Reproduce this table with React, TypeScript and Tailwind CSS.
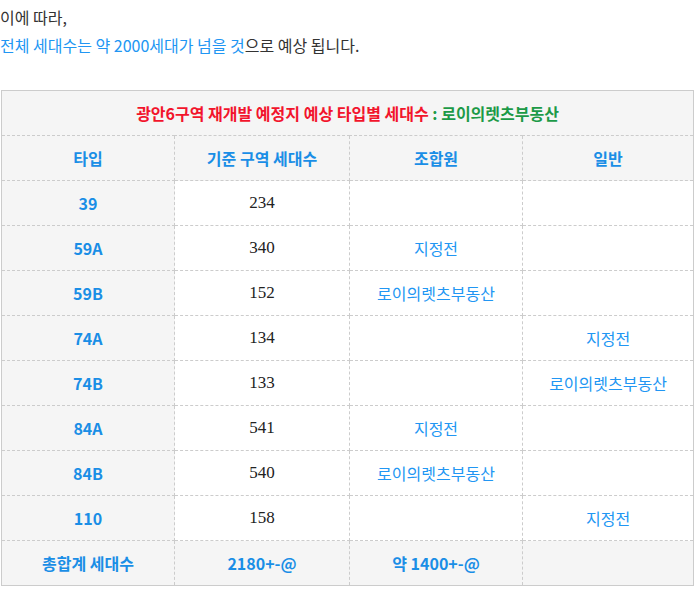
import React from "react";

const rows: [string, string, string, string][] = [
  ["39", "234", "", ""],
  ["59A", "340", "지정전", ""],
  ["59B", "152", "로이의렛츠부동산", ""],
  ["74A", "134", "", "지정전"],
  ["74B", "133", "", "로이의렛츠부동산"],
  ["84A", "541", "지정전", ""],
  ["84B", "540", "로이의렛츠부동산", ""],
  ["110", "158", "", "지정전"],
];

const cell = "border border-dashed border-[#cccccc] h-[45px] p-0 text-center align-middle";

export default function App() {
  return (
    <div
      className="bg-white w-[695px] h-[594px] text-[16px] text-[#333]"
      style={{ fontFamily: '"Noto Sans CJK KR", "Noto Sans", sans-serif' }}
    >
      <div className="pt-[3px] leading-[28px]">
        <p>이에 따라,</p>
        <p>
          <span className="text-[#2196f3]">전체 세대수는 약 2000세대가 넘을 것</span>으로 예상 됩니다.
        </p>
      </div>
      <div className="mt-[31px] ml-[1px]">
        <table className="w-[692px] border-collapse border border-solid border-[#cccccc] table-fixed">
          <colgroup>
            <col className="w-[173px]" />
            <col className="w-[175px]" />
            <col className="w-[173px]" />
            <col className="w-[171px]" />
          </colgroup>
          <tbody>
            <tr className="bg-[#f5f5f5]">
              <td colSpan={4} className={`${cell} font-bold`}>
                <span className="text-[#f2142c]">광안6구역 재개발 예정지 예상 타입별 세대수 </span>
                <span className="text-[#1c9a47]">: 로이의렛츠부동산</span>
              </td>
            </tr>
            <tr className="bg-[#f5f5f5] font-bold text-[#1a8ee6]">
              <td className={cell}>타입</td>
              <td className={cell}>기준 구역 세대수</td>
              <td className={cell}>조합원</td>
              <td className={cell}>일반</td>
            </tr>
            {rows.map((r) => (
              <tr key={r[0]}>
                <td className={`${cell} bg-[#f5f5f5] font-bold text-[#1a8ee6]`}>{r[0]}</td>
                <td
                  className={`${cell} text-[#222]`}
                  style={{ fontFamily: '"Liberation Serif", serif', fontSize: "17px" }}
                >
                  {r[1]}
                </td>
                <td className={`${cell} text-[#2196f3]`}>{r[2]}</td>
                <td className={`${cell} text-[#2196f3]`}>{r[3]}</td>
              </tr>
            ))}
            <tr className="bg-[#f5f5f5] font-bold text-[#1a8ee6]">
              <td className={cell}>총합계 세대수</td>
              <td className={cell}>2180+-@</td>
              <td className={cell}>약 1400+-@</td>
              <td className={cell}></td>
            </tr>
          </tbody>
        </table>
      </div>
    </div>
  );
}
